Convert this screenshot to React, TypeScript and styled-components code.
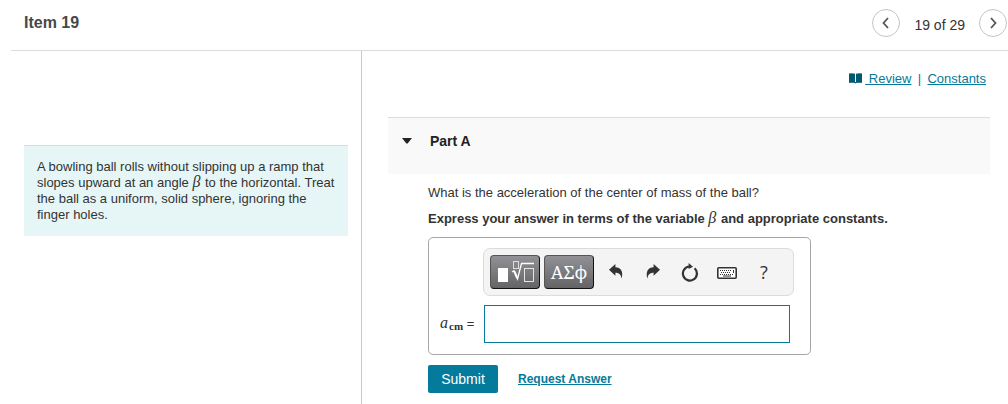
import React from "react";
import styled, { createGlobalStyle } from "styled-components";

const GlobalStyle = createGlobalStyle`
  * { box-sizing: border-box; }
  body {
    margin: 0;
    background: #fff;
    color: #333;
    font: 13px/16px "Liberation Sans", Arial, sans-serif;
  }
  button { font-family: inherit; cursor: pointer; }
`;

const Page = styled.div`
  display: flex;
  flex-direction: column;
  min-height: 100vh;
  padding-left: 11px;
`;

const Header = styled.header`
  display: flex;
  align-items: flex-start;
  justify-content: space-between;
  height: 51px;
  padding: 9px 1px 0 13px;
  border-bottom: 1px solid #dcdcdc;
`;

const ItemTitle = styled.h1`
  margin: 4px 0 0;
  font-size: 16px;
  line-height: 20px;
  color: #484848;
`;

const Pager = styled.nav`
  display: flex;
  align-items: center;
  gap: 14px;
`;

const PagerLabel = styled.span`
  padding-top: 4px;
  font-size: 14px;
`;

const RoundButton = styled.button`
  display: flex;
  align-items: center;
  justify-content: center;
  width: 28px;
  height: 28px;
  padding: 0;
  border: 1px solid #c4c4c4;
  border-radius: 50%;
  background: #fff;
`;

const Body = styled.div`
  display: flex;
  flex: 1;
`;

const Aside = styled.aside`
  flex: 0 0 351px;
  padding: 94px 13px 0;
  border-right: 1px solid #c8c8c8;
`;

const Problem = styled.p`
  margin: 0;
  padding: 13px 12px 13px 13px;
  border-top: 1px solid #d3dfdf;
  background: #e6f6f7;
`;

const Main = styled.main`
  flex: 1;
  min-width: 0;
  padding: 20px 18px 0 26px;
`;

const Links = styled.div`
  display: flex;
  align-items: center;
  justify-content: flex-end;
  padding-right: 4px;
`;

const Link = styled.a<{ $strong?: boolean }>`
  color: #047a9c;
  font-size: ${(p) => (p.$strong ? "12px" : "13px")};
  font-weight: ${(p) => (p.$strong ? "bold" : "normal")};
  text-underline-offset: 1px;
  white-space: pre;
`;

const Divider = styled.span`
  width: 16px;
  color: #047a9c;
  text-align: center;
`;

const PartHeader = styled.h2`
  display: flex;
  align-items: flex-start;
  gap: 18px;
  height: 57px;
  margin: 30px 0 0;
  padding: 15px 14px;
  border-top: 1px solid #dcdcdc;
  background: #f9f9f9;
  color: #222;
  font-size: 14px;
  line-height: 16px;
`;

const Content = styled.div`
  padding: 11px 0 0 40px;
`;

const Question = styled.p<{ $strong?: boolean }>`
  margin: 0 0 10px;
  font-weight: ${(p) => (p.$strong ? "bold" : "normal")};
`;

const MathVar = styled.i`
  margin-right: 1px;
  font: italic 16px/12px "Liberation Serif", "Times New Roman", serif;
`;

const AnswerBox = styled.form`
  width: 383px;
  max-width: 100%;
  padding: 10px 16px 11px 11px;
  border: 1px solid #a6a6a6;
  border-radius: 5px;
`;

const Toolbar = styled.div`
  display: flex;
  align-items: center;
  gap: 4px;
  height: 48px;
  margin-left: 43px;
  padding: 0 6px;
  border: 1px solid #dcdcdc;
  border-radius: 7px;
  background: #f4f4f4;
`;

const PaletteButton = styled.button`
  display: flex;
  align-items: center;
  justify-content: center;
  width: 50px;
  height: 34px;
  padding: 0;
  border: 1px solid #111;
  border-top-color: #555;
  border-left-color: #555;
  border-radius: 4px;
  background: linear-gradient(#929296, #646466);
  color: #fff;
  && { font: 18px/20px "Noto Serif", "DejaVu Serif Condensed", "Liberation Serif", serif; }
`;

const Tools = styled.div`
  display: flex;
  flex: 1;
  justify-content: space-between;
  padding: 0 11px 0 6px;
`;

const ToolButton = styled.button`
  display: flex;
  align-items: center;
  justify-content: center;
  width: 24px;
  height: 24px;
  padding: 0;
  border: 0;
  background: none;
  color: #333;
  && { font: 18px/20px "Open Sans", "Noto Sans", sans-serif; }
`;

const AnswerRow = styled.div`
  display: flex;
  align-items: center;
  margin-top: 9px;
`;

const AnswerLabel = styled.label`
  width: 44px;
  white-space: nowrap;
`;

const Subscript = styled.span`
  position: relative;
  top: 2px;
  font: bold 11px/12px "Liberation Serif", "Times New Roman", serif;
`;

const AnswerInput = styled.input`
  flex: 1;
  min-width: 0;
  height: 38px;
  margin-right: 4px;
  padding: 0 8px;
  border: 1px solid #047a9c;
  background: #fff;
  font: inherit;
`;

const Actions = styled.div`
  display: flex;
  align-items: center;
  gap: 20px;
  margin-top: 10px;
`;

const Submit = styled.button`
  width: 70px;
  height: 28px;
  padding: 0;
  border: 0;
  border-radius: 2px;
  background: #047a9c;
  color: #fff;
  font-size: 14px;
`;

const Chevron = ({ d }: { d: string }) => (
  <svg width="14" height="14" viewBox="0 0 14 14" fill="none" stroke="#555" strokeWidth="1.8" aria-hidden="true">
    <path d={d} />
  </svg>
);

const BookIcon = () => (
  <svg width="13" height="12" viewBox="0 0 13 12" fill="#005a70" aria-hidden="true">
    <path d="M0 .6Q3 0 6 .8V9.4Q3 8.8 0 9.4ZM7 .8Q10 0 13 .6V9.4Q10 8.8 7 9.4Z" />
    <path d="M0 9H13V9.8H7.4L6.5 10.4L5.6 9.8H0Z" />
  </svg>
);

const TemplatesIcon = () => (
  <svg width="40" height="24" viewBox="0 0 40 24" fill="none" stroke="#fff" aria-hidden="true">
    <rect x="3" y="8" width="10" height="14" fill="#fff" stroke="none" />
    <rect x="18.5" y="1.5" width="5" height="7" stroke="#ddd" />
    <path d="M17 12L19 10.8L22.5 19L26.5 3.5H39" strokeWidth="1.3" />
    <path d="M19.2 11.2L22.2 18" strokeWidth="2" />
    <rect x="29.5" y="8.5" width="9" height="13" stroke="#e4e4e4" />
  </svg>
);

const UndoIcon = ({ flip }: { flip?: boolean }) => (
  <svg width="16" height="16" viewBox="0 0 16 16" fill="#333" aria-hidden="true">
    <path
      transform={flip ? "matrix(-1 0 0 1 16 0)" : undefined}
      d="M1 5.8L7.4 0V3.2C12.8 3.4 15.6 7.2 13.6 14.8C13 10.7 11.4 8.9 7.4 8.8V11.8Z"
    />
  </svg>
);

const ResetIcon = () => (
  <svg width="18" height="20" viewBox="0 0 18 20" aria-hidden="true">
    <path d="M13.6 5.8A7 7 0 1 1 8.5 4" fill="none" stroke="#333" strokeWidth="2.2" transform="translate(0 .5)" />
    <path d="M7.6 1L12 4.8L7.6 7Z" fill="#333" />
  </svg>
);

const KeyboardIcon = () => (
  <svg width="20" height="14" viewBox="0 0 20 14" fill="none" stroke="#333" aria-hidden="true">
    <rect x=".8" y="2.8" width="18.4" height="10.4" rx="1" fill="#fff" strokeWidth="1.6" />
    <path d="M3 5.5H15M4 7.5H14M3 9.5H17" strokeDasharray="1 1" />
    <path d="M6 11H14M16.5 5V8" />
  </svg>
);

export default function App() {
  return (
    <>
      <GlobalStyle />
      <Page>
        <Header>
          <ItemTitle>Item 19</ItemTitle>
          <Pager aria-label="Items">
            <RoundButton aria-label="Previous item">
              <Chevron d="M9 2L4.5 7L9 12" />
            </RoundButton>
            <PagerLabel>19 of 29</PagerLabel>
            <RoundButton aria-label="Next item">
              <Chevron d="M5 2L9.5 7L5 12" />
            </RoundButton>
          </Pager>
        </Header>
        <Body>
          <Aside>
            <Problem>
              A bowling ball rolls without slipping up a ramp that slopes upward at an angle{" "}
              <MathVar>β</MathVar> to the horizontal. Treat the ball as a uniform, solid sphere,
              ignoring the finger holes.
            </Problem>
          </Aside>
          <Main>
            <Links>
              <BookIcon />
              <span>&nbsp;</span>
              <Link href="#review">{" Review"}</Link>
              <Divider>|</Divider>
              <Link href="#constants">Constants</Link>
            </Links>
            <PartHeader>
              <svg width="10" height="16" viewBox="0 0 10 16" fill="#222" aria-hidden="true">
                <path d="M0 5H10L5.6 10.5H4.4Z" />
              </svg>
              Part A
            </PartHeader>
            <Content>
              <Question>What is the acceleration of the center of mass of the ball?</Question>
              <Question $strong>
                Express your answer in terms of the variable <MathVar>β</MathVar> and appropriate
                constants.
              </Question>
              <AnswerBox id="answer-form" onSubmit={(e) => e.preventDefault()}>
                <Toolbar role="toolbar" aria-label="Equation tools">
                  <PaletteButton type="button" aria-label="Templates">
                    <TemplatesIcon />
                  </PaletteButton>
                  <PaletteButton type="button">ΑΣϕ</PaletteButton>
                  <Tools>
                    <ToolButton type="button" aria-label="Undo">
                      <UndoIcon />
                    </ToolButton>
                    <ToolButton type="button" aria-label="Redo">
                      <UndoIcon flip />
                    </ToolButton>
                    <ToolButton type="button" aria-label="Reset">
                      <ResetIcon />
                    </ToolButton>
                    <ToolButton type="button" aria-label="Keyboard shortcuts">
                      <KeyboardIcon />
                    </ToolButton>
                    <ToolButton type="button">?</ToolButton>
                  </Tools>
                </Toolbar>
                <AnswerRow>
                  <AnswerLabel htmlFor="answer">
                    <MathVar>a</MathVar>
                    <Subscript>cm</Subscript> =
                  </AnswerLabel>
                  <AnswerInput id="answer" type="text" />
                </AnswerRow>
              </AnswerBox>
              <Actions>
                <Submit type="submit" form="answer-form">
                  Submit
                </Submit>
                <Link $strong href="#request-answer">
                  Request Answer
                </Link>
              </Actions>
            </Content>
          </Main>
        </Body>
      </Page>
    </>
  );
}
